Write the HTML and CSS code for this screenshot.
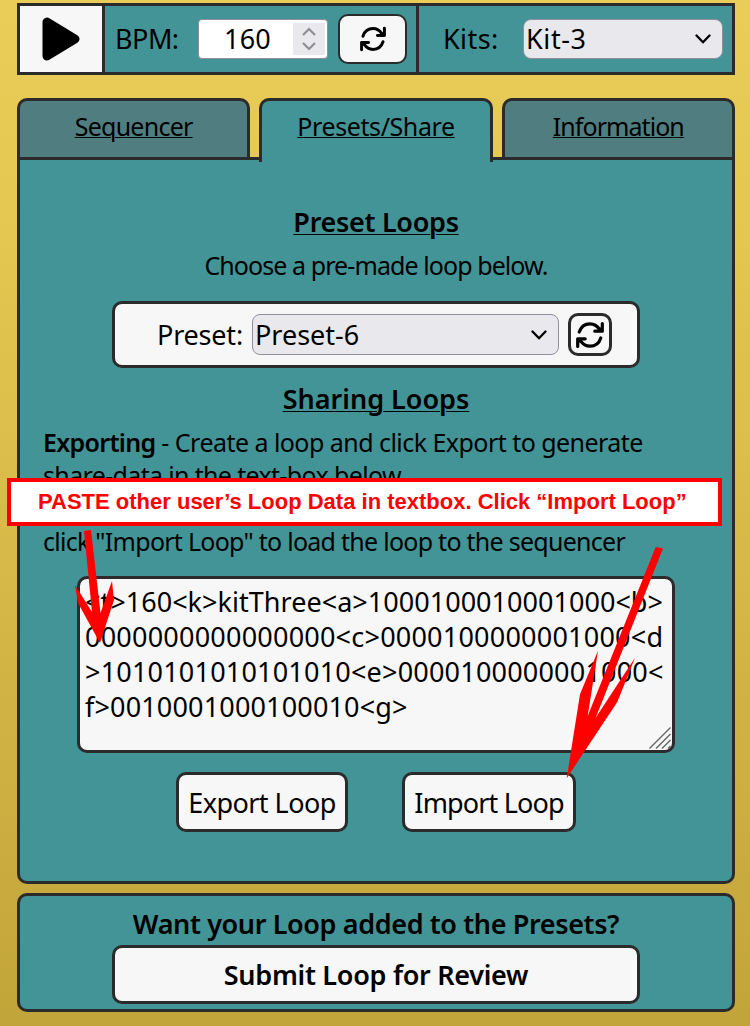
FILE: index.html
```html
<!DOCTYPE html>
<html lang="en">
<head>
<meta charset="utf-8">
<title>Loop Sequencer</title>
<link rel="stylesheet" href="styles.css">
</head>
<body>
<svg class="defs" width="0" height="0">
  <symbol id="refresh" viewBox="0 0 28 28">
    <g fill="none" stroke="currentColor" stroke-width="3.2" stroke-linecap="round" stroke-linejoin="round">
      <path d="M3.200 11C5 5.500 9.200 2.800 14 2.800c4 0 7.300 2.200 9.600 5.600"/>
      <path d="M26.300 2.500v7.700h-7.500"/>
      <path d="M24.800 17C23 22.500 18.800 25.200 14 25.200c-4 0-7.300-2.200-9.600-5.600"/>
      <path d="M1.700 25.500v-7.700h7.500"/>
    </g>
    <path fill="currentColor" d="M26 5v5h-5zM2 23v-5h5z"/>
  </symbol>
  <symbol id="chevron" viewBox="0 0 16 10">
    <path d="M1.500 1.500 8 8.300l6.500-6.800" fill="none" stroke="currentColor" stroke-width="2.300" stroke-linecap="round" stroke-linejoin="round"/>
  </symbol>
</svg>
<div class="app">
  <header class="bar">
    <div class="play"><svg width="38" height="44" viewBox="0 0 38 44"><path d="M5 5v34L33 22z" stroke="#000" stroke-width="9" stroke-linejoin="round"/></svg></div>
    <div class="tempo">
      <span class="label bpm">BPM:</span>
      <div class="number"><span>160</span>
        <div class="spin"><svg width="14" height="24" viewBox="0 0 14 24" fill="none" stroke="#8e8e95" stroke-width="2.200"><path d="M1 8l6-6 6 6M1 16l6 6 6-6"/></svg></div>
      </div>
      <div class="btn reload"><svg width="26" height="26"><use href="#refresh"/></svg></div>
    </div>
    <div class="kits">
      <span class="label kit-label">Kits:</span>
      <div class="select kit-select"><span class="kit">Kit-3</span><svg width="16" height="10"><use href="#chevron"/></svg></div>
    </div>
  </header>

  <nav class="tabs">
    <div class="tab"><span class="t-seq">Sequencer</span></div>
    <div class="tab active"><span class="t-pre">Presets/Share</span></div>
    <div class="tab"><span class="t-inf">Information</span></div>
  </nav>

  <main class="panel">
    <h2 class="h-preset"><span>Preset Loops</span></h2>
    <p class="choose">Choose a pre-made loop below.</p>
    <div class="preset-box">
      <span class="label preset-label">Preset:</span>
      <div class="select preset-select"><span class="preset">Preset-6</span><svg width="16" height="10"><use href="#chevron"/></svg></div>
      <div class="btn small"><svg width="28" height="28"><use href="#refresh"/></svg></div>
    </div>
    <h2 class="h-share"><span>Sharing Loops</span></h2>
    <div class="help">
      <div class="p1"><b>Exporting</b> - Create a loop and click Export to generate</div>
      <div class="p2">share-data in the text-box below.</div>
      <div class="p3"><b>Importing</b> - Paste share-data in the text-box and</div>
      <div class="p4">click "Import Loop" to load the loop to the sequencer</div>
    </div>
    <div class="data">
      <div class="d1">&lt;t&gt;160&lt;k&gt;kitThree&lt;a&gt;1000100010001000&lt;b&gt;</div>
      <div class="d2">0000000000000000&lt;c&gt;0000100000001000&lt;d</div>
      <div class="d3">&gt;1010101010101010&lt;e&gt;0000100000001000&lt;</div>
      <div class="d4">f&gt;0010001000100010&lt;g&gt;</div>
      <svg class="grip" width="22" height="22" viewBox="0 0 22 22" stroke="#666" stroke-width="1.400"><path d="M.5 21.500 21.500.5M7 21.500 21.500 7M13 21.500l8.500-8.500M19 21.500l2.500-2.500"/></svg>
    </div>
    <div class="actions">
      <div class="btn export"><span>Export Loop</span></div>
      <div class="btn import"><span>Import Loop</span></div>
    </div>
  </main>

  <footer class="submit">
    <div class="want">Want your Loop added to the Presets?</div>
    <div class="btn review"><span>Submit Loop for Review</span></div>
  </footer>

  <div class="callout"><span>PASTE other user’s Loop Data in textbox. Click “Import Loop”</span></div>
  <svg class="arrows" width="750" height="1026" fill="#f00">
    <path d="M84 531 91 530 100.500 613 112 581 114 600 100 643 78 603 75 585 92 612z"/>
    <path d="M655.700 547 663 548.500 595.700 717.700 635 657.700 617.300 702 566.700 778.300 580 694.300 598 650.700 587.700 716z"/>
  </svg>
</div>
</body>
</html>
```
FILE: styles.css
```css
* { box-sizing: border-box; }
body {
  margin: 0;
  font-family: "Noto Sans", "Open Sans", sans-serif;
  font-size: 25px;
  color: #000;
  background: linear-gradient(#eacd59, #e4c851 20%, #d2b445 65%, #c2a53a);
}
.defs { position: absolute; }
.app { position: relative; width: 750px; height: 1026px; padding: 3px 15px 0 17px; overflow: hidden; }
.bar { display: flex; height: 72px; border: 3px solid #2b2b2b; background: #439497; font-size: 27px; }
.label, .select span, .number span, .btn span, .tab span, h2 span, .callout span { white-space: nowrap; }
.play { width: 85px; border-right: 3px solid #2b2b2b; background: #f7f7f7; display: flex; align-items: center; padding-left: 22px; }
.tempo { width: 314px; border-right: 3px solid #2b2b2b; display: flex; align-items: center; padding-left: 10px; }
.bar span { padding-bottom: 2px; }
.bpm { width: 83px; letter-spacing: -.5px; }
.number { width: 130px; height: 40px; background: #fff; border: 1px solid #8f8f9d; border-radius: 4px; display: flex; align-items: center; padding-left: 25px; }
.number span { width: 69px; letter-spacing: .2px; }
.spin { width: 32px; height: 32px; background: #e9e9ed; display: flex; align-items: center; justify-content: center; }
.btn { display: flex; align-items: center; justify-content: center; border: 3px solid #2b2b2b; border-radius: 10px; background: #f7f7f7; font-size: 27px; }
.reload { width: 69px; height: 50px; margin-left: 10px; border-width: 2px; }
.kits { flex: 1; display: flex; align-items: center; padding-left: 24px; }
.kit-label { width: 80px; letter-spacing: .4px; }
.select { display: flex; align-items: center; justify-content: space-between; height: 41px; background: #e9e9ed; border: 1px solid #8f8f9d; border-radius: 8px; padding: 0 11px 0 2px; font-size: 27px; }
.kit-select { width: 200px; height: 40px; }
.kit { letter-spacing: .6px; }
.tabs { display: flex; gap: 9px; height: 59px; margin-top: 23px; }
.tab { flex: 1; height: 59px; border: 3px solid #2b2b2b; border-bottom: 0; border-radius: 10px 10px 0 0; background: #507e80; text-align: center; line-height: 50px; text-decoration: underline; text-decoration-thickness: 1px; text-underline-offset: 1px; }
.active { position: relative; height: 64px; background: #439497; }
.t-seq { letter-spacing: -.75px; }
.t-pre { letter-spacing: -.4px; }
.t-inf { letter-spacing: -.95px; }
.panel { height: 727px; border: 3px solid #2b2b2b; border-radius: 0 0 10px 10px; background: #439497; padding-top: 44px; }
h2 { margin: 0; font-size: 27px; font-weight: 600; line-height: 36px; text-align: center; text-decoration: underline; text-decoration-thickness: 1px; text-underline-offset: 2px; }
.h-preset { letter-spacing: -.3px; }
.choose { margin: 9px 0 19px; line-height: 33px; text-align: center; letter-spacing: -.92px; }
.preset-box { width: 528px; height: 67px; margin: 0 0 0 92px; border: 3px solid #2b2b2b; border-radius: 10px; background: #f7f7f7; display: flex; align-items: center; padding-left: 42px; font-size: 27px; }
.preset-label { width: 95px; letter-spacing: -.2px; }
.preset-select { width: 307px; }
.small { width: 44px; height: 43px; margin-left: 9px; }
.h-share { margin-top: 13px; }
.help { margin: 9px 0 0 23px; line-height: 33px; white-space: nowrap; }
.p1 { letter-spacing: -.54px; }
.p1 b { letter-spacing: -.7px; }
.p2, .p3 { letter-spacing: -.65px; }
.p4 { letter-spacing: -.73px; }
b { font-weight: 600; }
.data { position: relative; width: 598px; height: 177px; margin: 18px 0 0 57px; border: 3px solid #2b2b2b; border-radius: 10px; background: #f7f7f7; padding: 5px 0 0 5px; font-size: 27px; line-height: 35px; white-space: nowrap; }
.d1 { letter-spacing: .03px; }
.d2 { letter-spacing: .22px; }
.d3 { letter-spacing: .2px; }
.d4 { letter-spacing: .16px; }
.grip { position: absolute; right: 1px; bottom: 1px; }
.actions { display: flex; gap: 54px; margin: 19px 0 0 156px; }
.export { width: 172px; height: 60px; letter-spacing: -.55px; }
.import { width: 174px; height: 60px; letter-spacing: -.85px; }
.submit { height: 119px; margin-top: 9px; border: 3px solid #2b2b2b; border-radius: 10px; background: #439497; padding-top: 9px; font-size: 27px; font-weight: 600; }
.want { height: 40px; line-height: 37px; text-align: center; white-space: nowrap; letter-spacing: -.38px; }
.review { width: 528px; height: 59px; margin-left: 92px; letter-spacing: -.28px; }
.callout { position: absolute; left: 7px; top: 478px; width: 715px; height: 48px; border: 4px solid #f00; background: #fff; color: #f00; font: bold 22px/40px "Liberation Sans", Arial, sans-serif; padding-left: 27px; }
.arrows { position: absolute; left: 0; top: 0; }
```
